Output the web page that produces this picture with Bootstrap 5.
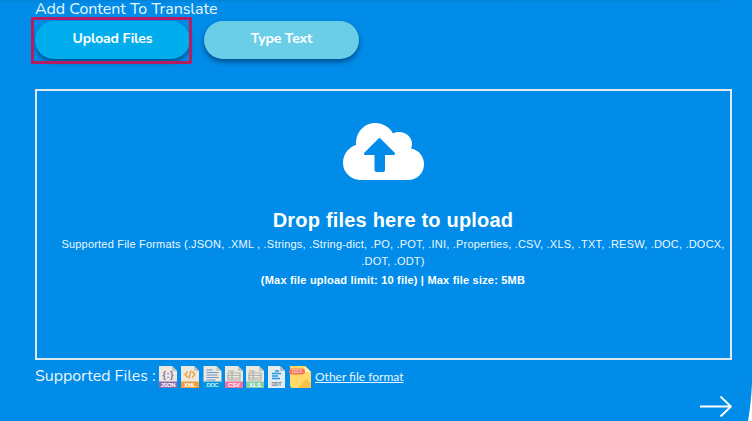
<!DOCTYPE html>
<html lang="en">
<head>
<meta charset="utf-8">
<meta name="viewport" content="width=device-width, initial-scale=1">
<title>Add Content To Translate</title>
<link href="https://cdn.jsdelivr.net/npm/bootstrap@5.3.0/dist/css/bootstrap.min.css" rel="stylesheet">
<style>
body{background:#008ce8;color:#fff;font-family:Nunito,"Noto Sans",sans-serif;height:421px}
.page{height:421px;padding:0 20px 0 35px}
.page::before{content:"";position:absolute;left:0;top:0;width:722px;height:3px;background:linear-gradient(#0082d7,#008ce800)}
.heading{font-size:16px;line-height:18px;height:21px;margin:0;font-weight:400;color:#e9f5fd;letter-spacing:-.04px}
.pill{width:155px;height:38px;border:0;border-radius:19px;padding:0 0 3px;color:#fff;font-size:14px;line-height:35px;font-weight:700;letter-spacing:-.16px;box-shadow:0 3px 5px rgba(0,30,70,.55)}
.pill:hover{color:#fff}
.pill-active{background:#00adec}
.pill-alt{background:#6bcee8}
.tab{margin-right:14px}
.callout{left:-4px;top:-4px;width:161px;height:47px;border:3px solid #b71b60;border-radius:1px;pointer-events:none}
.dropzone{height:271px;margin-top:30px;border:2px solid #e0e9ee;padding:32px 0 0 19px;font-family:"Liberation Sans",Arial,sans-serif;letter-spacing:.2px}
.cloud{width:81px;height:58px;margin-right:19px}
.dropzone h2{font-size:20px;line-height:24px;font-weight:700;margin:27px 0 4px}
.formats{font-size:11px;line-height:17px;margin:0;color:#edf7fe}
.limits{font-size:11px;line-height:17px;margin:2px 0 0;font-weight:700}
.files{height:32px}
.files-label{font-size:16px;line-height:22px;width:124px;color:#e9f5fd;letter-spacing:-.05px;white-space:nowrap}
.icons{width:153px;height:22px;margin-top:2px}
.other{font-family:Lato,sans-serif;font-size:12px;line-height:18px;margin:2px 0 0 3px;color:#e9f5fd}
.next{width:34px;height:22px;margin-top:4px}
.edge{right:0;bottom:0;width:4px;height:38px}
</style>
</head>
<body>
<main class="page position-relative overflow-hidden">
<h1 class="heading">Add Content To Translate</h1>
<div class="d-flex">
<div class="position-relative tab"><button class="btn pill pill-active">Upload Files</button><span class="callout position-absolute"></span></div>
<button class="btn pill pill-alt">Type Text</button>
</div>
<section class="dropzone d-flex flex-column align-items-center text-center">
<svg class="cloud" viewBox="0 0 81 58"><path fill="#fff" d="M18 57C8 57 0 49.500 0 40C0 31 5.500 24.500 13 22C12.500 9.500 21 0 32 0C40 0 47 4.500 50 10.500C59 6 69 12 69 21C69 23 68.500 24.500 68 25.500C76 27 81 33.500 81 41C81 50.500 74 57 65 57Z"/><path fill="#008ce8" d="M35.500 15.500Q36.500 14.500 37.500 15.500L51.500 29.500Q53 32 50.500 32H42V47Q42 49 40 49H33.500Q31.500 49 31.500 47V32H22.500Q20 32 21.500 29.500Z"/></svg>
<h2>Drop files here to upload</h2>
<p class="formats text-nowrap">Supported File Formats (.JSON, .XML , .Strings, .String-dict, .PO, .POT, .INI, .Properties, .CSV, .XLS, .TXT, .RESW, .DOC, .DOCX,<br>.DOT, .ODT)</p>
<p class="limits">(Max file upload limit: 10 file) | Max file size: 5MB</p>
</section>
<div class="files d-flex align-items-center">
<span class="files-label">Supported Files :</span>
<svg class="icons" viewBox="0 0 153 22" font-family="Liberation Sans, sans-serif" font-weight="700" text-anchor="middle">
<defs><path id="sheet" d="M0 0H13L18 5V17H0Z"/><path id="fold" fill="#c4c4bb" d="M13 0L18 5H13Z"/>
<g id="table" fill="none" stroke="#b5b0ab" stroke-width="1.200"><path d="M3 5H9M3 7H15V14H3ZM3 9.500H15M3 12H15M7 5V14"/></g></defs>
<g><use href="#sheet" fill="#e9e9e0"/><use href="#fold"/><rect y="15.500" width="18" height="6.500" fill="#8d6ba5"/><text x="9" y="12" font-size="9" textLength="11" fill="#87649e">{:}</text><text x="9" y="21.200" font-size="6" textLength="15" fill="#fff">JSON</text></g>
<g transform="translate(22)"><use href="#sheet" fill="#e9e9e0"/><use href="#fold"/><rect y="15.500" width="18" height="6.500" fill="#f29c3c"/><path d="M7 5.500L4 8.500L7 11.500M11 5.500L14 8.500L11 11.500M10 4.500L8 12.500" fill="none" stroke="#f29c3c" stroke-width="1.300"/><text x="9" y="21.200" font-size="6" textLength="12" fill="#fff">XML</text></g>
<g transform="translate(44.500)"><use href="#sheet" fill="#e9e9e0"/><use href="#fold"/><rect y="15.500" width="18" height="6.500" fill="#0096d5"/><path d="M3 4H9M3 6.500H15M3 9H14M3 11.500H15M3 14H12" stroke="#7394c8" stroke-width="1.200"/><text x="9" y="21.200" font-size="6" textLength="12" fill="#c9ecfb">DOC</text></g>
<g transform="translate(66)"><use href="#sheet" fill="#e9e9e0"/><use href="#fold"/><use href="#table"/><rect y="15.500" width="18" height="6.500" fill="#f36fa0"/><text x="9" y="21.200" font-size="6" textLength="12" fill="#fff">CSV</text></g>
<g transform="translate(87)"><use href="#sheet" fill="#e9e9e0"/><use href="#fold"/><use href="#table"/><rect y="15.500" width="18" height="6.500" fill="#82cdaa"/><text x="9" y="21.200" font-size="6" textLength="12" fill="#fff">XLS</text></g>
<g transform="translate(109)"><path fill="#e3ebef" d="M0 0H12L17 5V22H0Z"/><path fill="#b2bfc8" d="M12 0L17 5H12Z"/><path d="M7 5H11M4 7.500H13M4 10H10M4 12.500H12" stroke="#2196e5" stroke-width="1.400"/><text x="8.500" y="20" font-size="5" textLength="10" fill="#737d83">ODT</text></g>
<g transform="translate(130)"><path fill="#ffda68" d="M1 0H16L22 6V22H4Q1 22 1 19Z"/><path fill="#fff0bc" d="M16 0L22 6H16Z"/><path fill="#f7c247" d="M9 22L17 13L22 17V22Z"/><rect y="2.500" width="16" height="6" rx="3" fill="#ef755c"/><text x="8" y="7.300" font-size="5" textLength="11" fill="#ffc0ad">DOCX</text></g>
</svg>
<a href="#" class="other">Other file format</a>
</div>
<div class="d-flex justify-content-end"><svg class="next" viewBox="0 0 34 22" fill="none" stroke="#fff" stroke-width="1.900"><path d="M2 10.500H33M22.500 .5L33 10.500L22.500 20.500"/></svg></div>
<svg class="edge position-absolute" viewBox="0 0 4 38"><path fill="#fff" d="M4 0Q3 21 0 38H4Z"/></svg>
</main>
<script src="https://cdn.jsdelivr.net/npm/bootstrap@5.3.0/dist/js/bootstrap.bundle.min.js"></script>
</body>
</html>
